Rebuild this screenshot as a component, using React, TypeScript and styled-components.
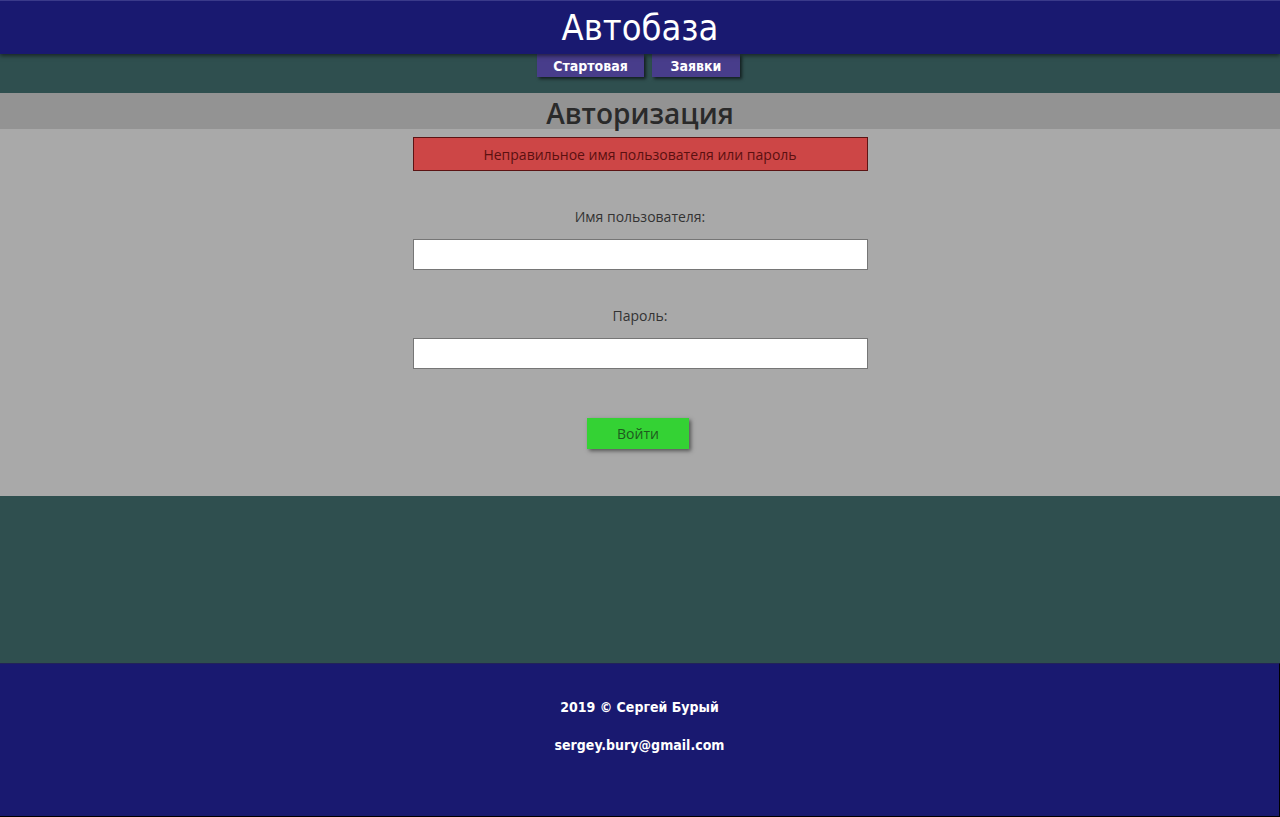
import React from "react";
import styled, { createGlobalStyle } from "styled-components";

const Global = createGlobalStyle`
  html, body { margin: 0; padding: 0; }
  body {
    background: #2f4f4f;
    font-family: "Open Sans", "Noto Sans", sans-serif;
    height: 817px;
    overflow: hidden;
  }
`;

const comic = `"Comic Sans MS", "DejaVu Sans Condensed", "DejaVu Sans", cursive`;

const Page = styled.div`
  display: flex;
  flex-direction: column;
  height: 817px;
  background: #2f4f4f;
`;

const Header = styled.header`
  height: 54px;
  background: #191970;
  border-top: 1px solid #3a3a8a;
  box-sizing: border-box;
  display: flex;
  justify-content: center;
  align-items: center;
  box-shadow: 0 2px 4px rgba(0, 0, 0, 0.5);
  position: relative;
  z-index: 2;
`;

const Logo = styled.h1`
  margin: 0;
  color: #fff;
  font-family: ${comic};
  font-size: 36px;
  font-weight: normal;
  line-height: 1;
`;

const Nav = styled.nav`
  display: flex;
  justify-content: center;
  gap: 8px;
  height: 39px;
  padding-right: 3px;
`;

const NavButton = styled.a<{ w: number }>`
  width: ${(p) => p.w}px;
  height: 23px;
  background: #483d8b;
  color: #fff;
  font-family: ${comic};
  font-weight: bold;
  font-size: 14px;
  display: flex;
  align-items: center;
  justify-content: center;
  box-shadow: 2px 2px 3px rgba(0, 0, 0, 0.6);
  text-decoration: none;
  cursor: pointer;
`;

const Main = styled.main`
  background: #a9a9a9;
  height: 403px;
  display: flex;
  flex-direction: column;
  align-items: center;
`;

const TitleBand = styled.div`
  align-self: stretch;
  height: 36px;
  background: #939393;
  display: flex;
  justify-content: center;
  align-items: flex-end;
`;

const Title = styled.h2`
  margin: 0;
  font-size: 28px;
  font-weight: 600;
  color: #2a2a2a;
  line-height: 36px;
  transform: translateY(2px);
`;

const Alert = styled.div`
  margin-top: 8px;
  width: 455px;
  height: 34px;
  box-sizing: border-box;
  background: #cd4646;
  border: 1px solid #5c1414;
  color: #5a1010;
  font-size: 14px;
  display: flex;
  align-items: center;
  justify-content: center;
`;

const Form = styled.form`
  display: flex;
  flex-direction: column;
  align-items: center;
  width: 455px;
`;

const Label = styled.label`
  font-size: 14px;
  color: #333;
  margin-top: 36px;
  margin-bottom: 12px;
  line-height: 20px;
`;

const Input = styled.input`
  width: 455px;
  height: 31px;
  box-sizing: border-box;
  border: 1px solid #767676;
  background: #fff;
  margin: 0;
`;

const Submit = styled.button`
  margin-top: 49px;
  margin-right: 4px;
  width: 102px;
  height: 31px;
  background: #34d234;
  border: none;
  color: #1e5a1e;
  font-family: "Open Sans", "Noto Sans", sans-serif;
  font-size: 14px;
  box-shadow: 2px 2px 4px rgba(0, 0, 0, 0.5);
  cursor: pointer;
`;

const Spacer = styled.div`
  flex: 1;
`;

const Footer = styled.footer`
  height: 154px;
  background: #191970;
  border-right: 1px solid #000;
  border-bottom: 1px solid #000;
  border-top: 1px solid #22225a;
  box-sizing: border-box;
  display: flex;
  flex-direction: column;
  align-items: center;
  padding-top: 33px;
  gap: 17px;
`;

const FooterText = styled.p`
  margin: 0;
  color: #fff;
  font-family: ${comic};
  font-weight: bold;
  font-size: 14px;
  line-height: 21px;
`;

export default function App() {
  return (
    <>
      <Global />
      <Page>
        <Header>
          <Logo>Автобаза</Logo>
        </Header>
        <Nav>
          <NavButton w={107}>Стартовая</NavButton>
          <NavButton w={88}>Заявки</NavButton>
        </Nav>
        <Main>
          <TitleBand>
            <Title>Авторизация</Title>
          </TitleBand>
          <Alert>Неправильное имя пользователя или пароль</Alert>
          <Form onSubmit={(e) => e.preventDefault()}>
            <Label htmlFor="u">Имя пользователя:</Label>
            <Input id="u" type="text" />
            <Label htmlFor="p">Пароль:</Label>
            <Input id="p" type="password" />
            <Submit type="submit">Войти</Submit>
          </Form>
        </Main>
        <Spacer />
        <Footer>
          <FooterText>2019 © Сергей Бурый</FooterText>
          <FooterText>sergey.bury@gmail.com</FooterText>
        </Footer>
      </Page>
    </>
  );
}
